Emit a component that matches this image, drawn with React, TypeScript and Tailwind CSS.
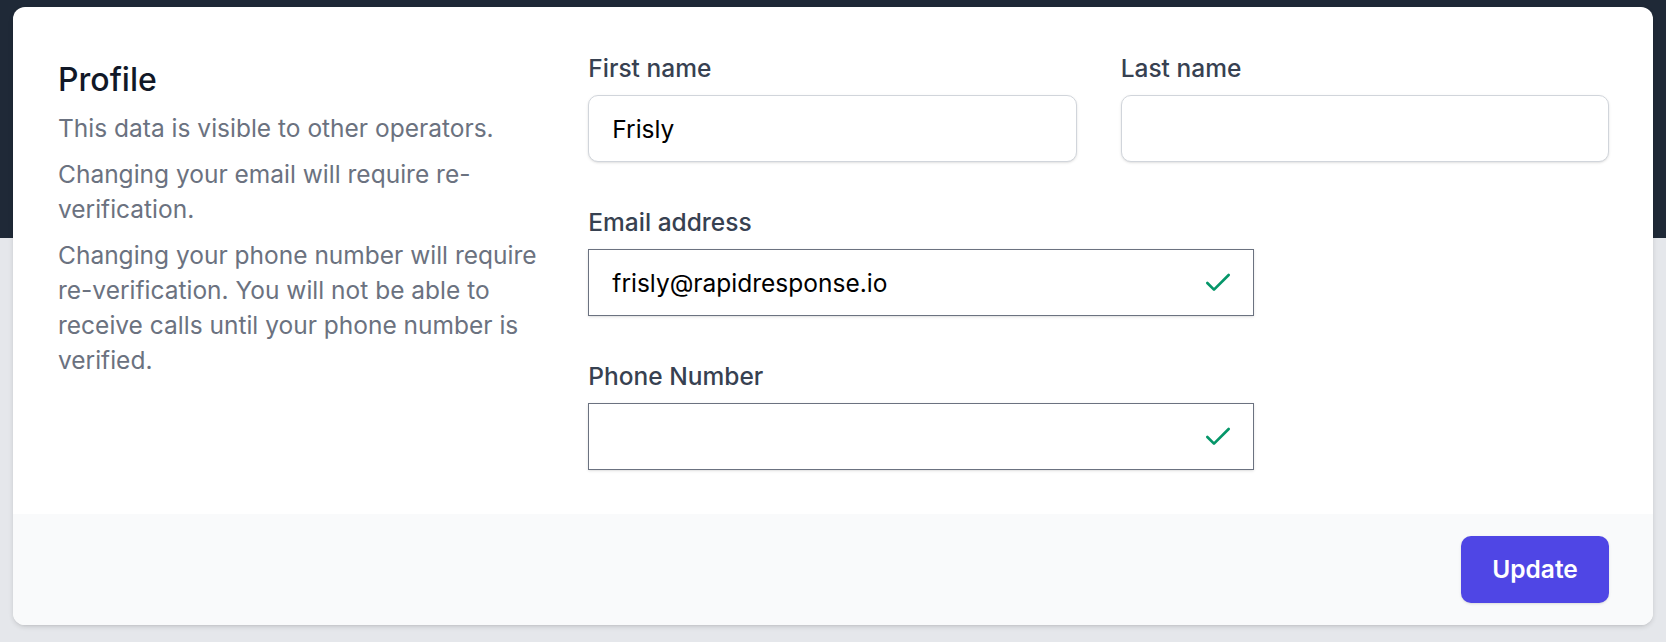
import { Check } from 'lucide-react';

const notes = [
  'This data is visible to other operators.',
  'Changing your email will require re-verification.',
  'Changing your phone number will require re-verification. You will not be able to receive calls until your phone number is verified.',
];

type FieldProps = {
  label: string;
  value?: string;
  span: string;
  verified?: boolean;
};

const Field = ({ label, value = '', span, verified }: FieldProps) => (
  <div className={span}>
    <label className="block text-[24.5px] leading-[35px] font-medium text-[#374151]">{label}</label>
    <div className="relative mt-[9px]">
      <input
        readOnly
        value={value}
        className={
          verified
            ? 'block h-[67px] w-full border border-[#6b7280] bg-white px-[23px] text-[24.5px] text-black shadow-sm outline-none'
            : 'block h-[67px] w-full rounded-[10px] border border-[#d1d5db] bg-white px-[23px] text-[24.5px] text-black shadow-sm outline-none'
        }
      />
      {/* verified mark */}
      {verified && (
        <Check
          size={32}
          strokeWidth={2}
          className="pointer-events-none absolute right-[20px] top-1/2 -translate-y-1/2 text-[#059669]"
        />
      )}
    </div>
  </div>
);

export default function App() {
  return (
    <div className="min-h-screen bg-[linear-gradient(to_bottom,#1f2937_238px,#e5e7eb_238px)] px-[13px] pt-[7px] pb-[17px] font-['Inter',sans-serif]">
      <div className="overflow-hidden rounded-[12px] bg-white shadow-[0_2px_5px_rgba(0,0,0,0.12),0_2px_3px_-2px_rgba(0,0,0,0.1)]">
        <div className="grid grid-cols-3 gap-x-[44px] pt-[44px] pb-[44px] pl-[43px] pr-[44px]">
          <div className="pl-[2px]">
            <h3 className="mt-[4px] text-[32px] leading-[49px] font-medium text-[#111827]">Profile</h3>
            <div className="mt-[7px] flex flex-col gap-[11px] text-[24.5px] leading-[35px] text-[#6b7280]">
              {notes.map((n) => (
                <p key={n}>{n}</p>
              ))}
            </div>
          </div>

          <div className="col-span-2 grid grid-cols-6 gap-x-[44px] gap-y-[43px]">
            <Field label="First name" value="Frisly" span="col-span-3" />
            <Field label="Last name" span="col-span-3" />
            <Field label="Email address" value="frisly@rapidresponse.io" span="col-span-4" verified />
            <Field label="Phone Number" span="col-span-4" verified />
          </div>
        </div>

        <div className="flex justify-end bg-[#f9fafb] px-[44px] py-[22px]">
          <button className="h-[67px] w-[148px] rounded-[10px] bg-[#4f46e5] text-[24.5px] font-semibold text-white shadow-sm">
            Update
          </button>
        </div>
      </div>
    </div>
  );
}
